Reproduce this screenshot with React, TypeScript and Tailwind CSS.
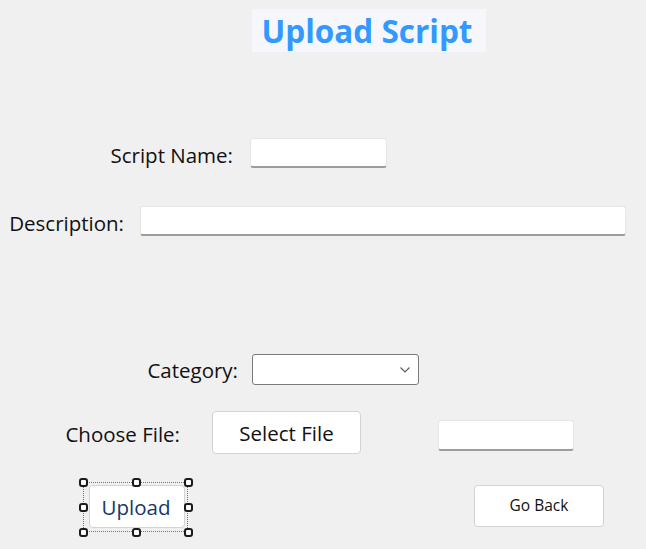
import React from "react";

const font = { fontFamily: '"Open Sans", "Noto Sans", sans-serif' };

function TextBox({ className }: { className: string }) {
  return (
    <div
      className={`rounded-[3px] border border-[#e6e6e6] border-b-2 border-b-[#9c9c9c] bg-white ${className}`}
    />
  );
}

function Handle({ className }: { className: string }) {
  return (
    <span
      className={`absolute h-[9px] w-[9px] rounded-[3px] border-2 border-[#1a1a1a] bg-white ${className}`}
    />
  );
}

export default function App() {
  return (
    <div
      className="h-[549px] w-[646px] overflow-hidden bg-[#f0f0f0] text-[20.5px] leading-none text-[#111]"
      style={font}
    >
      {/* title */}
      <div className="ml-[252px] mt-[9px] flex h-[43px] w-[234px] items-center justify-center bg-[#f5f7fd]">
        <span className="mr-[4px] text-[31.5px] font-bold text-[#3399ff]">Upload Script</span>
      </div>

      {/* script name */}
      <div className="mt-[86px] flex h-[30px] items-center">
        <div className="mt-[5px] w-[233px] text-right">Script Name:</div>
        <TextBox className="ml-[17px] h-[30px] w-[137px]" />
      </div>

      {/* description */}
      <div className="mt-[38px] flex h-[30px] items-center">
        <div className="mt-[4px] w-[124px] text-right">Description:</div>
        <TextBox className="ml-[16px] h-[30px] w-[486px]" />
      </div>

      {/* category */}
      <div className="mt-[118px] flex h-[31px] items-center">
        <div className="mt-[2px] w-[238px] text-right">Category:</div>
        <div className="ml-[14px] flex h-[31px] w-[167px] items-center justify-end rounded-[3px] border border-[#7a7a7a] bg-white pr-[7px]">
          <svg width="12" height="8" viewBox="0 0 12 8" fill="none">
            <path d="M1.5 1.5 L6 6 L10.5 1.5" stroke="#606060" strokeWidth="1.2" />
          </svg>
        </div>
      </div>

      {/* choose file */}
      <div className="mt-[26px] flex h-[43px] items-center">
        <div className="mt-[4px] w-[180px] text-right">Choose File:</div>
        <button className="ml-[32px] flex h-[43px] w-[149px] items-center justify-center rounded-[4px] border border-[#d3d3d3] bg-white pt-[1px]">
          Select File
        </button>
        <TextBox className="ml-[77px] mt-[6px] h-[31px] w-[136px]" />
      </div>

      {/* actions */}
      <div className="mt-[31px] flex h-[43px] items-start">
        <div className="relative ml-[89px]">
          <button className="flex h-[43px] w-[96px] items-center justify-center rounded-[4px] border border-[#d3d3d3] bg-white pr-[2px] pt-[1px] text-[#16386a]">
            Upload
          </button>
          {/* designer selection */}
          <div className="pointer-events-none absolute left-[-6px] top-[-3px] h-[50px] w-[105px] border border-dotted border-[#777]" />
          <Handle className="left-[-10.5px] top-[-7.5px]" />
          <Handle className="left-[42.5px] top-[-7.5px]" />
          <Handle className="left-[94.5px] top-[-7.5px]" />
          <Handle className="left-[-10.5px] top-[17.5px]" />
          <Handle className="left-[94.5px] top-[17.5px]" />
          <Handle className="left-[-10.5px] top-[42.5px]" />
          <Handle className="left-[42.5px] top-[42.5px]" />
          <Handle className="left-[94.5px] top-[42.5px]" />
        </div>
        <button className="ml-[289px] flex h-[42px] w-[130px] items-center justify-center rounded-[4px] border border-[#d3d3d3] bg-white text-[15.5px] text-[#111]">
          Go Back
        </button>
      </div>
    </div>
  );
}
